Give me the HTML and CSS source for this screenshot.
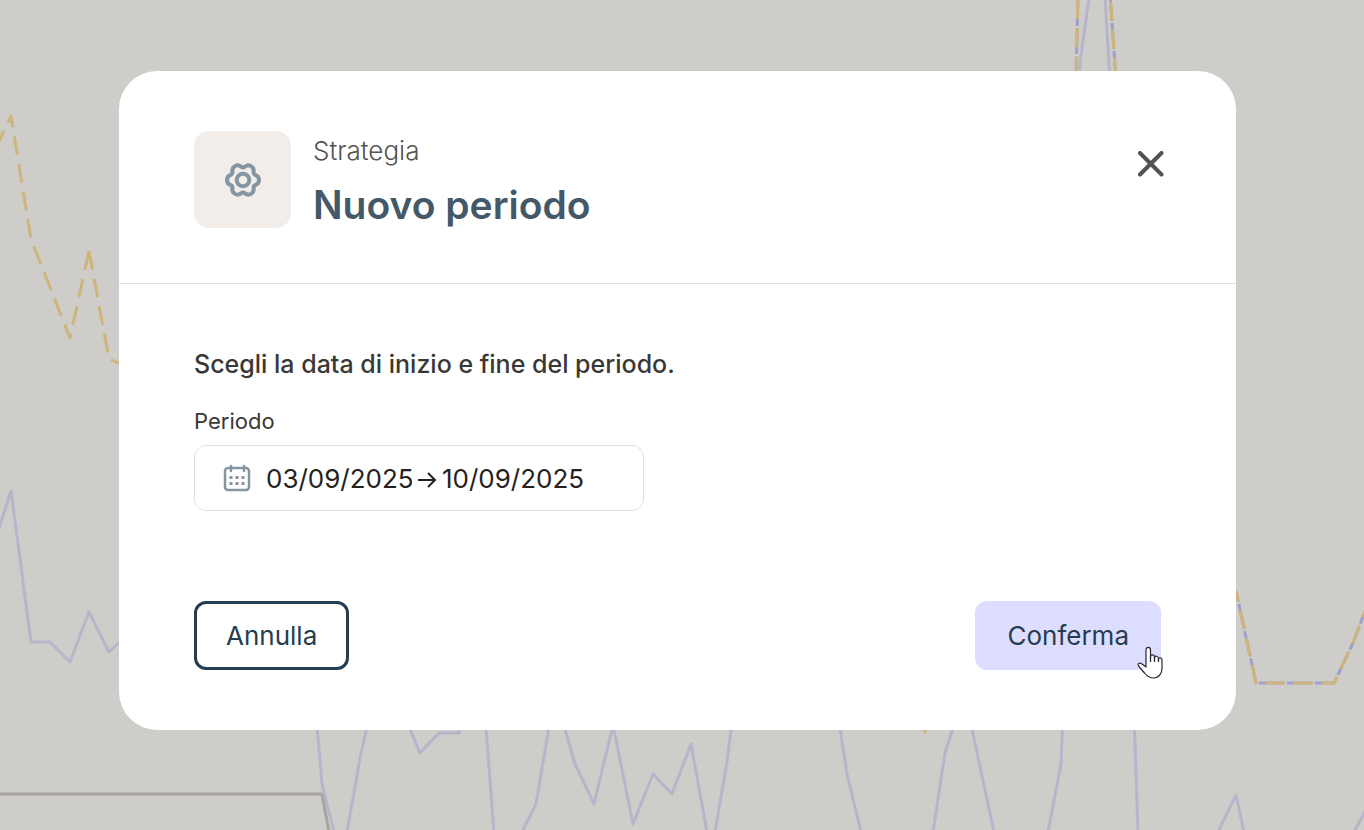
FILE: index.html
```html
<!DOCTYPE html>
<html lang="it">
<head>
    <meta charset="UTF-8">
    <meta name="viewport" content="width=device-width, initial-scale=1.0">
    <title>Nuovo periodo</title>
    <link rel="stylesheet" href="styles.css">
</head>
<body>
    <!-- Dimmed chart behind the dialog -->
    <svg class="chart" viewBox="0 0 1364 830" preserveAspectRatio="none" aria-hidden="true">
        <polyline class="line base" points="-5,794 322,794 329,832"/>
        <g class="line lilac">
            <polyline points="-8,550 11,491 31,642 50,642 70,662 89,612 109,652 128,634"/>
            <polyline points="316,715 322,784 334,832"/>
            <polyline points="347,832 361,753 370,715"/>
            <polyline points="404,715 420,753 439,733 459,733 461,715"/>
            <polyline points="485,715 494,832"/>
            <polyline points="522,832 536,804 551,715"/>
            <polyline points="561,715 575,764 594,804 613,725 633,824 653,774 672,794 691,744 707,832"/>
            <polyline points="715,832 727,762 733,715"/>
            <polyline points="838,715 847,774 861,832"/>
            <polyline points="933,832 945,753 957,715"/>
            <polyline points="969,715 994,832"/>
            <polyline points="1048,832 1061,764 1063,715"/>
            <polyline points="1134,715 1138,832"/>
            <polyline points="1218,832 1236,795 1244,832"/>
            <polyline points="1354,832 1370,802"/>
            <polyline points="1089,-2 1080,62 1080,80"/>
            <polyline points="1105,-2 1110,80"/>
        </g>
        <g class="line violet">
            <polyline class="left" points="1078,-6 1076,80"/>
            <polyline class="right" points="1110,-6 1116,80"/>
            <polyline class="tail" points="1236,591 1256,683 1334,683 1353,643 1368,603"/>
        </g>
        <g class="line gold">
            <polyline class="plain" points="-5,150 11,116 31,239 70,338 89,251"/>
            <polyline points="89,251 109,359 128,367"/>
            <polyline class="left" points="1078,-6 1076,80"/>
            <polyline class="right" points="1110,-6 1116,80"/>
            <polyline class="tail" points="1236,591 1256,683 1334,683 1353,643 1368,603"/>
        </g>
        <circle class="dot" cx="925" cy="731" r="2"/>
    </svg>

    <div class="overlay">
        <div class="modal" role="dialog" aria-modal="true" aria-labelledby="title">
            <header class="modal-header">
                <div class="badge">
                    <svg class="gear" viewBox="-20 -20 40 40" aria-hidden="true">
                        <path d="M12.65-4.93A5.3 5.3 0 0 1 12.65 4.93A3.3 3.3 0 0 0 10.6 8.49A5.3 5.3 0 0 1 2.05 13.42A3.3 3.3 0 0 0-2.05 13.42A5.3 5.3 0 0 1-10.6 8.49A3.3 3.3 0 0 0-12.65 4.93A5.3 5.3 0 0 1-12.65-4.93A3.3 3.3 0 0 0-10.6-8.49A5.3 5.3 0 0 1-2.05-13.42A3.3 3.3 0 0 0 2.05-13.42A5.3 5.3 0 0 1 10.6-8.49A3.3 3.3 0 0 0 12.65-4.93Z"/>
                        <circle r="6.3"/>
                    </svg>
                </div>
                <div class="heading">
                    <p class="section">Strategia</p>
                    <h1 class="title" id="title">Nuovo periodo</h1>
                </div>
                <button class="close" type="button" aria-label="Chiudi">
                    <svg viewBox="0 0 26 26" aria-hidden="true">
                        <path d="M2 2L23.500 23.500M23.500 2L2 23.500"/>
                    </svg>
                </button>
            </header>

            <form class="modal-body">
                <h2 class="question">Scegli la data di inizio e fine del periodo.</h2>
                <label class="label" for="start">Periodo</label>
                <div class="date-range">
                    <svg class="calendar" viewBox="0 0 28 28" aria-hidden="true">
                        <rect x="2" y="4" width="24" height="22" rx="3"/>
                        <path d="M8 2V7M21 2V7"/>
                        <path class="days" d="M6.500 13.500h3M12.500 13.500h3M18.500 13.500h3M6.500 19.500h3M12.500 19.500h3M18.500 19.500h3"/>
                    </svg>
                    <input class="date" id="start" type="text" value="03/09/2025">
                    <svg class="arrow" viewBox="0 0 20 20" aria-hidden="true">
                        <path d="M1 12H18M11 5L18 12L11 19"/>
                    </svg>
                    <input class="date" type="text" value="10/09/2025" aria-label="Fine periodo">
                </div>
                <div class="actions">
                    <button class="button cancel" type="button">Annulla</button>
                    <button class="button confirm" type="button">
                        Conferma
                        <svg class="pointer" viewBox="0 0 26 34" aria-hidden="true">
                            <path d="M9 21V4C9 .5 13.500 .5 13.500 4V13V10.500C14 8 17.500 8.500 17.500 11V14V11.500C18 9.500 21.500 9.800 21.500 12.500V15V13C22 11 25 11.500 25 14V22C25 28 21.500 32 16.500 32C11.500 32 9.500 29.500 7.500 27L2 20.500C-.5 17.500 2.500 16 5 18Z"/>
                            <path d="M13.500 10V16M17.500 11V16M21.500 12V16"/>
                        </svg>
                    </button>
                </div>
            </form>
        </div>
    </div>
</body>
</html>
```

FILE: styles.css
```css
* {
    margin: 0;
    padding: 0;
    box-sizing: border-box;
}

body {
    font-family: 'Inter', 'Liberation Sans', sans-serif;
    min-height: 100vh;
    background: #cecdc9;
    color: #3a3836;
}

/* Chart */
.chart {
    position: fixed;
    inset: 0;
    width: 100%;
    height: 100%;
}

.line {
    fill: none;
    stroke-width: 3;
    stroke-linejoin: round;
}

.base {
    stroke: #a8a49f;
}

.lilac {
    stroke: #b7b5cb;
}

.violet {
    stroke: #a19fcb;
    stroke-dasharray: 26 2;
}

.gold {
    stroke: #ceb57b;
    stroke-dasharray: 19 9;
}

.violet .left {
    stroke-dashoffset: 22;
}

.violet .right {
    stroke-dashoffset: 27;
}

.violet .tail {
    stroke-dashoffset: 15;
}

.gold .plain {
    stroke-dashoffset: -2;
}

.gold .left {
    stroke-dashoffset: 22;
}

.gold .right {
    stroke-dashoffset: 20;
}

.gold .tail {
    stroke-dashoffset: 8;
}

.dot {
    fill: #ceb57b;
}

/* Dialog */
.overlay {
    position: relative;
    min-height: 100vh;
    padding: 71px 128px 100px 119px;
}

.modal {
    background: #fff;
    border-radius: 38px;
}

.modal-header {
    display: flex;
    align-items: flex-start;
    padding: 60px 72px 52px 75px;
    border-bottom: 1px solid #e2e2e2;
}

.badge {
    display: flex;
    align-items: center;
    justify-content: center;
    width: 97px;
    height: 97px;
    margin-right: 22px;
    border-radius: 15px;
    background: #f2ede9;
}

.gear {
    width: 40px;
    height: 40px;
    fill: none;
    stroke: #8496a1;
    stroke-width: 4;
}

.heading {
    flex: 1;
}

.section {
    font-size: 26px;
    font-weight: 300;
    line-height: 40px;
    color: #55524f;
}

.title {
    margin-top: 8px;
    font-size: 39px;
    font-weight: 600;
    line-height: 52px;
    color: #435868;
}

.close {
    margin-top: 20px;
    border: none;
    background: none;
    cursor: pointer;
}

.close svg {
    display: block;
    width: 26px;
    height: 26px;
    fill: none;
    stroke: #55524f;
    stroke-width: 4;
    stroke-linecap: round;
}

.modal-body {
    padding: 60px 75px;
}

.question {
    font-size: 25px;
    font-weight: 500;
    line-height: 40px;
}

.label {
    display: block;
    margin-top: 20px;
    font-size: 22px;
    line-height: 34px;
}

.date-range {
    display: flex;
    align-items: center;
    width: 450px;
    max-width: 100%;
    height: 66px;
    margin-top: 7px;
    padding-left: 28px;
    border: 1px solid #dde1e3;
    border-radius: 12px;
}

.calendar {
    width: 28px;
    height: 28px;
    margin-right: 15px;
    fill: none;
    stroke: #8496a1;
    stroke-width: 2.5;
    stroke-linecap: round;
}

.calendar .days {
    stroke-width: 3;
    stroke-linecap: butt;
}

.date {
    width: 146px;
    border: none;
    outline: none;
    background: none;
    font-family: inherit;
    font-size: 26px;
    color: #242220;
}

.arrow {
    width: 20px;
    height: 20px;
    margin: 0 5px;
    fill: none;
    stroke: #242220;
    stroke-width: 2;
}

.actions {
    display: flex;
    justify-content: space-between;
    margin-top: 90px;
}

.button {
    position: relative;
    height: 69px;
    padding: 0 32px;
    border: none;
    border-radius: 12px;
    font-family: inherit;
    font-size: 26px;
    color: #263d50;
    cursor: pointer;
}

.cancel {
    padding: 0 29px;
    border: 3px solid #263d50;
    background: #fff;
}

.confirm {
    background: #dddeff;
}

/* Hand pointer resting on the confirm button */
.pointer {
    position: absolute;
    right: -2px;
    bottom: -10px;
    width: 26px;
    height: 34px;
    fill: #fff;
    stroke: #262430;
    stroke-width: 1.2;
    stroke-linejoin: round;
}
```
